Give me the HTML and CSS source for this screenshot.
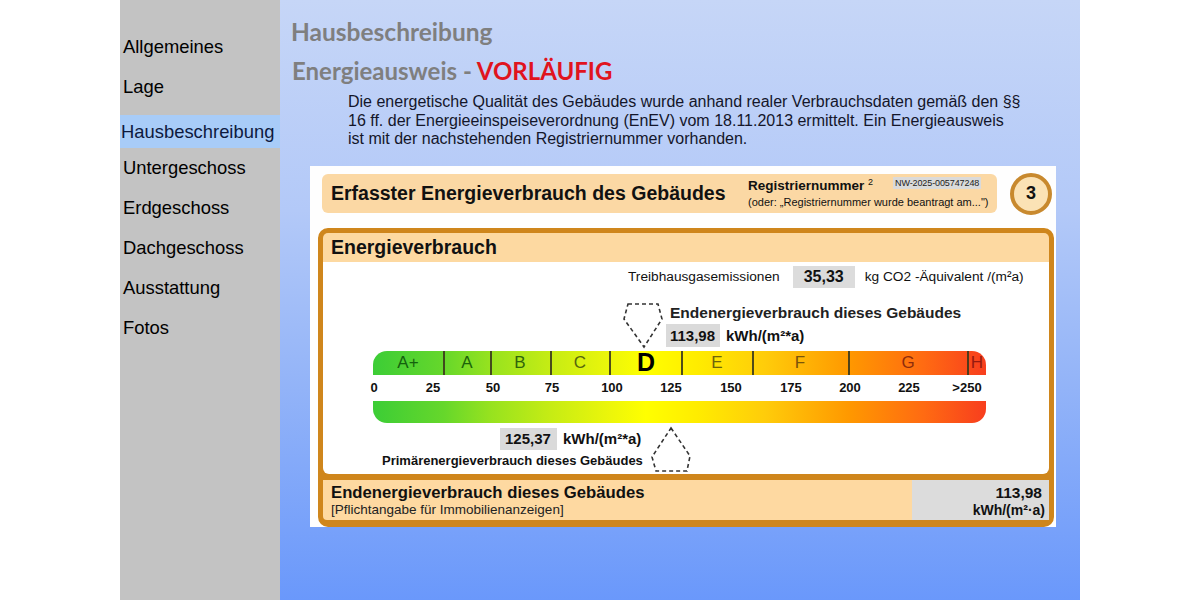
FILE: index.html
```html
<!DOCTYPE html>
<html lang="de">
<head>
<meta charset="utf-8">
<title>Hausbeschreibung</title>
<link rel="stylesheet" href="styles.css">
</head>
<body>
<div class="page">
  <nav class="sidebar">
    <ul class="nav">
      <li>Allgemeines</li>
      <li>Lage</li>
      <li class="active">Hausbeschreibung</li>
      <li>Untergeschoss</li>
      <li>Erdgeschoss</li>
      <li>Dachgeschoss</li>
      <li>Ausstattung</li>
      <li>Fotos</li>
    </ul>
  </nav>
  <main class="main">
    <h1 class="title">Hausbeschreibung</h1>
    <h2 class="subtitle">Energieausweis - <span class="red">VORLÄUFIG</span></h2>
    <p class="intro">Die energetische Qualität des Gebäudes wurde anhand realer Verbrauchsdaten gemäß den §§<br>16 ff. der Energieeinspeiseverordnung (EnEV) vom 18.11.2013 ermittelt. Ein Energieausweis<br>ist mit der nachstehenden Registriernummer vorhanden.</p>

    <div class="cert">
      <div class="cert-head">
        <div class="head-bar">
          <div class="head-title">Erfasster Energieverbrauch des Gebäudes</div>
          <div class="reg">
            <div class="reg-top"><span class="reg-label">Registriernummer <sup>2</sup></span><span class="reg-num">NW-2025-005747248</span></div>
            <div class="reg-sub">(oder: „Registriernummer wurde beantragt am...")</div>
          </div>
        </div>
        <div class="page-num">3</div>
      </div>

      <div class="ev-box">
        <div class="ev-title">Energieverbrauch</div>
        <div class="ev-body">
          <div class="thg">
            <span class="thg-label">Treibhausgasemissionen</span>
            <span class="thg-val">35,33</span>
            <span class="thg-unit">kg CO2 -Äquivalent /(m²a)</span>
          </div>
          <svg class="scale" width="726" height="183" viewBox="0 0 726 183">
            <defs>
              <linearGradient id="grad" gradientUnits="userSpaceOnUse" x1="50" y1="0" x2="663" y2="0">
                <stop offset="0" stop-color="#3ccd36"/>
                <stop offset="0.116" stop-color="#66d72b"/>
                <stop offset="0.19" stop-color="#96e21f"/>
                <stop offset="0.29" stop-color="#c6ec14"/>
                <stop offset="0.387" stop-color="#ecf60a"/>
                <stop offset="0.445" stop-color="#ffff00"/>
                <stop offset="0.53" stop-color="#ffec00"/>
                <stop offset="0.64" stop-color="#ffcc0a"/>
                <stop offset="0.777" stop-color="#ff9800"/>
                <stop offset="0.9" stop-color="#ff6a12"/>
                <stop offset="1" stop-color="#f83e1e"/>
              </linearGradient>
              <clipPath id="topclip">
                <path d="M50,84 V74 A14,14 0 0 1 64,60 H649 A14,14 0 0 1 663,74 V84 Z"/>
              </clipPath>
            </defs>
            <!-- end energy arrow -->
            <polygon class="dash" points="305,13 335,13 339,28 321,56 301,28"/>
            <text class="lbl" x="347" y="27">Endenergieverbrauch dieses Gebäudes</text>
            <rect class="valbox" x="343" y="33" width="54" height="23"/>
            <text class="val" x="347" y="50">113,98</text>
            <text class="val" x="403" y="50">kWh/(m²*a)</text>

            <!-- top scale bar -->
            <path fill="url(#grad)" d="M50,84 V74 A14,14 0 0 1 64,60 H649 A14,14 0 0 1 663,74 V84 Z"/>
            <g class="div">
              <line x1="121" y1="60" x2="121" y2="84"/>
              <line x1="168" y1="60" x2="168" y2="84"/>
              <line x1="228" y1="60" x2="228" y2="84"/>
              <line x1="287" y1="60" x2="287" y2="84"/>
              <line x1="359" y1="60" x2="359" y2="84"/>
              <line x1="430" y1="60" x2="430" y2="84"/>
              <line x1="526" y1="60" x2="526" y2="84"/>
              <line x1="645" y1="60" x2="645" y2="84"/>
            </g>
            <g class="cls" clip-path="url(#topclip)">
              <text x="85" y="77" fill="#14620e">A+</text>
              <text x="144" y="77" fill="#1c640a">A</text>
              <text x="197" y="77" fill="#30660a">B</text>
              <text x="257" y="77" fill="#56660c">C</text>
              <text class="big" x="323" y="80">D</text>
              <text x="394" y="77" fill="#6e640a">E</text>
              <text x="477" y="77" fill="#7a540a">F</text>
              <text x="585" y="77" fill="#8e2c0c">G</text>
              <text x="654" y="77" fill="#961a10">H</text>
            </g>
            <g class="num">
              <text x="51" y="101">0</text>
              <text x="110" y="101">25</text>
              <text x="170" y="101">50</text>
              <text x="229" y="101">75</text>
              <text x="289" y="101">100</text>
              <text x="348" y="101">125</text>
              <text x="408" y="101">150</text>
              <text x="468" y="101">175</text>
              <text x="527" y="101">200</text>
              <text x="586" y="101">225</text>
              <text x="644" y="101">&gt;250</text>
            </g>
            <!-- bottom bar -->
            <path fill="url(#grad)" d="M50,110 H663 V118 A14,14 0 0 1 649,132 H64 A14,14 0 0 1 50,118 Z"/>

            <!-- primary energy -->
            <rect class="valbox" x="177" y="137" width="57" height="22"/>
            <text class="val" x="182" y="153">125,37</text>
            <text class="val" x="240" y="153">kWh/(m²*a)</text>
            <text class="lbl2" x="59" y="174">Primärenergieverbrauch dieses Gebäudes</text>
            <polygon class="dash" points="348,137 367,165 364,180 333,180 329,166"/>
          </svg>
        </div>
        <div class="ev-foot">
          <div class="foot-text">
            <div class="foot-title">Endenergieverbrauch dieses Gebäudes</div>
            <div class="foot-sub">[Pflichtangabe für Immobilienanzeigen]</div>
          </div>
          <div class="foot-val">
            <div class="foot-num">113,98</div>
            <div class="foot-unit">kWh/(m²·a)</div>
          </div>
        </div>
      </div>
    </div>
  </main>
</div>
</body>
</html>
```
FILE: styles.css
```css
* { box-sizing: border-box; }

body {
  margin: 0;
  background: #ffffff;
}

.page {
  width: 960px;
  height: 600px;
  margin: 0 auto;
  display: flex;
}

/* sidebar */
.sidebar {
  width: 160px;
  flex: none;
  background: #c3c3c3;
  font-family: "Liberation Sans", Arial, sans-serif;
  font-size: 18.4px;
}

.nav {
  list-style: none;
  margin: 0;
  padding: 27px 0 0;
}

.nav li {
  height: 40px;
  line-height: 40px;
  padding-left: 3px;
  color: #000;
  white-space: nowrap;
}

.nav li.active {
  height: 33px;
  line-height: 33px;
  margin-top: 8px;
  padding-left: 1px;
  background: #a8ccf8;
  color: #0e1a3e;
}

/* main */
.main {
  width: 800px;
  flex: none;
  background: linear-gradient(180deg, #c6d6f7 0%, #b3c9f8 35%, #92b3f8 65%, #6a98fb 100%);
  font-family: "Liberation Sans", Arial, sans-serif;
}

.title {
  margin: 0;
  padding: 18px 0 0 11px;
  font-family: Lato, "Open Sans", sans-serif;
  font-weight: 700;
  font-size: 24.5px;
  line-height: 28px;
  color: #7f7f7f;
}

.subtitle {
  margin: 11px 0 0;
  padding-left: 12px;
  font-family: Lato, "Open Sans", sans-serif;
  font-weight: 700;
  font-size: 24px;
  line-height: 28px;
  color: #7f7f7f;
}

.red {
  color: #e0141e;
}

.intro {
  margin: 8px 0 0 68px;
  font-size: 16px;
  line-height: 18.5px;
  color: #14162a;
  white-space: nowrap;
}

/* certificate */
.cert {
  margin: 17px 0 0 30px;
  width: 746px;
  height: 361px;
  background: #fefefe;
  padding: 7px 0 0 8px;
}

.cert-head {
  display: flex;
  align-items: center;
  margin-left: 4px;
  height: 42px;
}

.head-bar {
  width: 675px;
  height: 39px;
  background: #fbd8a4;
  border-radius: 6px;
  display: flex;
  align-items: center;
}

.head-title {
  width: 423px;
  padding-left: 9px;
  font-weight: 700;
  font-size: 19.5px;
  color: #111;
  white-space: nowrap;
}

.reg {
  padding-left: 3px;
  display: flex;
  flex-direction: column;
  gap: 3px;
  color: #111;
}

.reg-top {
  display: flex;
  align-items: flex-start;
}

.reg-label {
  width: 145px;
  font-weight: 700;
  font-size: 13.5px;
  line-height: 15px;
}

.reg-label sup {
  font-size: 9px;
  font-weight: 400;
  vertical-align: 5px;
  line-height: 0;
}

.reg-num {
  background: #dadada;
  font-size: 9px;
  line-height: 12px;
  padding: 0 2px;
  margin-top: -1px;
  letter-spacing: -0.1px;
  color: #222;
}

.reg-sub {
  font-size: 11px;
  line-height: 13px;
  white-space: nowrap;
}

.page-num {
  width: 42px;
  height: 42px;
  margin-left: 13px;
  border-radius: 50%;
  border: 4px solid #c8892e;
  background: #fbe2b5;
  display: flex;
  align-items: center;
  justify-content: center;
  font-weight: 700;
  font-size: 18px;
  color: #111;
}

.ev-box {
  margin-top: 13px;
  width: 736px;
  height: 299px;
  border: 5px solid #cf861c;
  border-radius: 10px;
  background: #cf861c;
  display: flex;
  flex-direction: column;
}

.ev-title {
  height: 29px;
  line-height: 29px;
  background: #fdd9a1;
  border-radius: 5px 5px 0 0;
  padding-left: 8px;
  font-weight: 700;
  font-size: 19.5px;
  color: #111;
}

.ev-body {
  height: 212px;
  background: #ffffff;
  border-radius: 0 0 6px 6px;
  padding-top: 4px;
}

.thg {
  display: flex;
  align-items: center;
  height: 22px;
  padding-left: 305px;
  font-size: 13.7px;
  color: #111;
}

.thg-val {
  width: 62px;
  height: 22px;
  margin: 0 10px 0 13px;
  background: #dcdcdc;
  font-weight: 700;
  font-size: 16px;
  line-height: 22px;
  text-align: center;
}

.scale {
  display: block;
  margin-top: 3px;
  font-family: "Liberation Sans", Arial, sans-serif;
}

.scale .dash {
  fill: none;
  stroke: #333;
  stroke-width: 1.6;
  stroke-dasharray: 4 3;
}

.scale .lbl {
  font-weight: 700;
  font-size: 15.5px;
  fill: #222;
}

.scale .lbl2 {
  font-weight: 700;
  font-size: 13px;
  fill: #111;
}

.scale .valbox {
  fill: #dadada;
}

.scale .val {
  font-weight: 700;
  font-size: 15px;
  fill: #111;
}

.scale .div line {
  stroke: #3c3a1c;
  stroke-width: 1.8;
}

.scale .cls text {
  font-size: 17px;
  text-anchor: middle;
}

.scale .cls text.big {
  font-weight: 700;
  font-size: 25px;
  fill: #000;
}

.scale .num text {
  font-weight: 700;
  font-size: 13px;
  text-anchor: middle;
  fill: #111;
}

.ev-foot {
  margin-top: 6px;
  height: 40px;
  background: #fed9a1;
  display: flex;
  border-radius: 0 0 4px 4px;
}

.foot-text {
  flex: 1;
  padding: 3px 0 0 8px;
  color: #111;
}

.foot-title {
  font-weight: 700;
  font-size: 16.7px;
  line-height: 19px;
  white-space: nowrap;
}

.foot-sub {
  font-size: 13.5px;
  line-height: 16px;
  white-space: nowrap;
  color: #222;
}

.foot-val {
  width: 137px;
  background: #dcdcdc;
  text-align: right;
  padding: 3px 4px 0 0;
  font-weight: 700;
  color: #111;
}

.foot-num {
  font-size: 15.5px;
  line-height: 19px;
  padding-right: 3px;
}

.foot-unit {
  font-size: 14px;
  line-height: 17px;
}
```
